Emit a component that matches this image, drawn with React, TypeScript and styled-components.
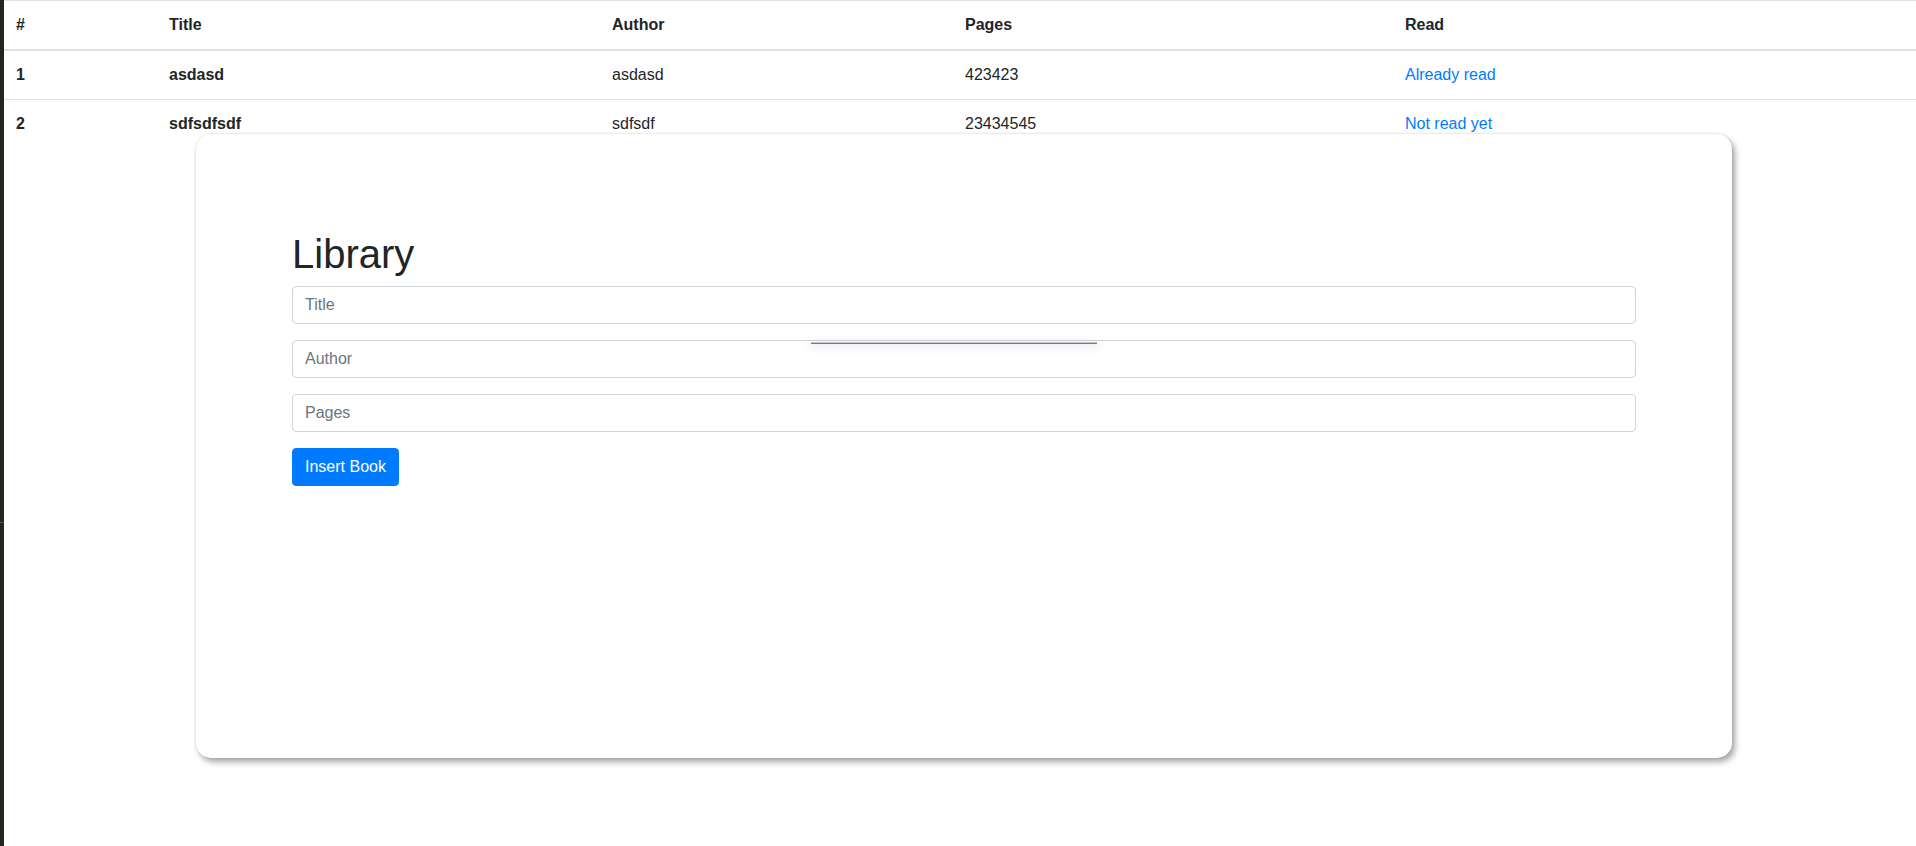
import React from 'react';
import styled, { createGlobalStyle } from 'styled-components';

const GlobalStyle = createGlobalStyle`
  html, body {
    margin: 0;
    padding: 0;
    background: #fff;
  }
  body {
    font-family: "Liberation Sans", Arial, sans-serif;
    font-size: 16px;
    line-height: 1.5;
    color: #212529;
  }
  * {
    box-sizing: border-box;
  }
`;

const Page = styled.div`
  display: flex;
  height: 846px;
  overflow: hidden;
`;

const SideStrip = styled.div`
  position: relative;
  width: 4px;
  flex-shrink: 0;
  background: #25251f;

  &::after {
    content: '';
    position: absolute;
    left: 0;
    right: 0;
    top: 522px;
    height: 1px;
    background: #55554c;
  }
`;

const Main = styled.div`
  position: relative;
  flex: 1;
  background: #fff;
`;

const TableWrap = styled.div`
  height: 134px;
  overflow: hidden;
`;

const Table = styled.table`
  width: 100%;
  border-collapse: collapse;
  color: #212529;
`;

const HeadCell = styled.th<{ $width?: number }>`
  width: ${(p) => (p.$width ? `${p.$width}px` : 'auto')};
  padding: 12px;
  text-align: left;
  vertical-align: bottom;
  font-weight: 700;
  border-top: 1px solid #dee2e6;
  border-bottom: 2px solid #dee2e6;
`;

const Cell = styled.td<{ $bold?: boolean }>`
  padding: 12px;
  text-align: left;
  vertical-align: top;
  font-weight: ${(p) => (p.$bold ? 700 : 400)};
  border-top: 1px solid #dee2e6;
`;

const ReadLink = styled.a`
  color: #007bff;
  text-decoration: none;
  cursor: pointer;
`;

const Card = styled.div`
  position: absolute;
  left: 192px;
  top: 134px;
  width: 1536px;
  height: 624px;
  padding: 96px;
  background: #fff;
  border-radius: 15px;
  box-shadow: 3px 4px 6px rgba(0, 0, 0, 0.35), 0 0 3px rgba(0, 0, 0, 0.12);
`;

const Heading = styled.h1`
  margin: 0 0 8px;
  font-size: 40px;
  font-weight: 500;
  line-height: 1.2;
  color: #212529;
`;

const Form = styled.form`
  display: flex;
  flex-direction: column;
  align-items: flex-start;
  gap: 16px;
`;

const Input = styled.input`
  display: block;
  width: 100%;
  height: 38px;
  padding: 6px 12px;
  font-family: inherit;
  font-size: 16px;
  line-height: 1.5;
  color: #495057;
  background: #fff;
  border: 1px solid #ced4da;
  border-radius: 4px;
  outline: none;

  &::placeholder {
    color: #6c757d;
  }
`;

const Button = styled.button`
  padding: 6px 12px;
  font-family: inherit;
  font-size: 16px;
  line-height: 1.5;
  color: #fff;
  background: #007bff;
  border: 1px solid #007bff;
  border-radius: 4px;
  cursor: pointer;
`;

const Sliver = styled.div`
  position: absolute;
  left: 615px;
  top: 208px;
  width: 286px;
  height: 2px;
  background: #7a7a7e;
  border-top: 1px solid #c4c6cc;
  box-shadow: 0 2px 8px 2px rgba(0, 0, 0, 0.08);
  z-index: 2;
`;

const books = [
  { id: 1, title: 'asdasd', author: 'asdasd', pages: '423423', read: 'Already read' },
  { id: 2, title: 'sdfsdfsdf', author: 'sdfsdf', pages: '23434545', read: 'Not read yet' },
];

const App: React.FC = () => {
  return (
    <>
      <GlobalStyle />
      <Page>
        <SideStrip />
        <Main>
          <TableWrap>
            <Table>
              <thead>
                <tr>
                  <HeadCell $width={153}>#</HeadCell>
                  <HeadCell $width={443}>Title</HeadCell>
                  <HeadCell $width={353}>Author</HeadCell>
                  <HeadCell $width={440}>Pages</HeadCell>
                  <HeadCell>Read</HeadCell>
                </tr>
              </thead>
              <tbody>
                {books.map((b) => (
                  <tr key={b.id}>
                    <Cell $bold>{b.id}</Cell>
                    <Cell $bold>{b.title}</Cell>
                    <Cell>{b.author}</Cell>
                    <Cell>{b.pages}</Cell>
                    <Cell>
                      <ReadLink>{b.read}</ReadLink>
                    </Cell>
                  </tr>
                ))}
              </tbody>
            </Table>
          </TableWrap>
          <Card>
            <Heading>Library</Heading>
            <Form onSubmit={(e) => e.preventDefault()}>
              <Input placeholder="Title" />
              <Input placeholder="Author" />
              <Input placeholder="Pages" />
              <Button type="submit">Insert Book</Button>
            </Form>
            <Sliver />
          </Card>
        </Main>
      </Page>
    </>
  );
};

export default App;
